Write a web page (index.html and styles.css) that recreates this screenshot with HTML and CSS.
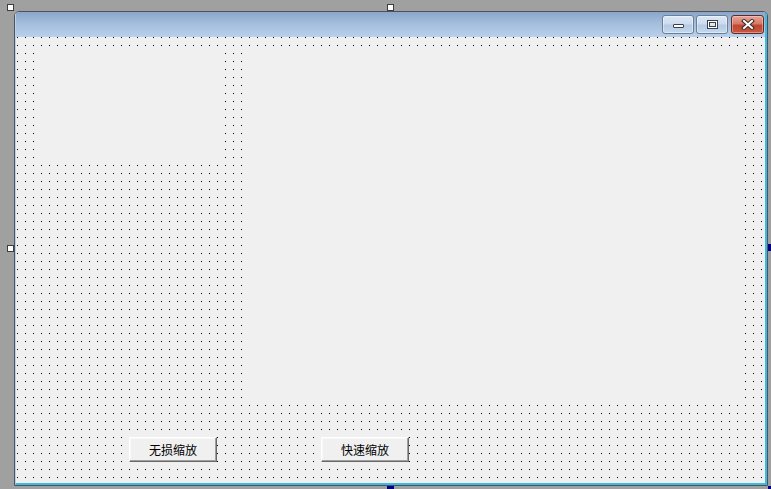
FILE: index.html
```html
<!DOCTYPE html>
<html lang="zh">
<head>
<meta charset="utf-8">
<title>Form1</title>
<link rel="stylesheet" href="styles.css">
</head>
<body>
<div class="canvas">
  <div class="window">
    <div class="frame">
      <div class="titlebar">
        <div class="tb-btn tb-min"><span class="min-glyph"></span></div>
        <div class="tb-btn tb-max"><span class="max-glyph"></span></div>
        <div class="tb-btn tb-close">
          <svg width="14" height="11" viewBox="0 0 14 11">
            <path d="M3 2 L11 9 M11 2 L3 9" stroke="#3a2a2a" stroke-width="4" stroke-linecap="square"/>
            <path d="M3 2 L11 9 M11 2 L3 9" stroke="#ffffff" stroke-width="2" stroke-linecap="square"/>
          </svg>
        </div>
      </div>
      <div class="client">
        <div class="ctl image-box"></div>
        <div class="ctl picture-box"></div>
        <button class="ctl cmd cmd-lossless">无损缩放</button>
        <button class="ctl cmd cmd-fast">快速缩放</button>
      </div>
    </div>
  </div>
  <span class="handle h-tl"></span>
  <span class="handle h-tm"></span>
  <span class="handle h-ml"></span>
  <span class="handle solid h-mr"></span>
  <span class="handle solid h-bm"></span>
  <span class="handle solid h-br"></span>
</div>
</body>
</html>
```
FILE: styles.css
```css
html, body {
  margin: 0;
  padding: 0;
}
body {
  width: 771px;
  height: 489px;
  overflow: hidden;
  background: #a0a0a0;
  font-family: "Noto Sans CJK SC", "Noto Sans", sans-serif;
}
.canvas {
  position: relative;
  width: 771px;
  height: 489px;
  padding: 11px 0 0 14px;
  box-sizing: border-box;
}
.window {
  width: 754px;
  height: 475px;
  box-sizing: border-box;
  border: 1px solid #4e5359;
  border-radius: 5px 5px 0 0;
  background: #f0f0f0;
  overflow: hidden;
}
.frame {
  height: 100%;
  box-sizing: border-box;
  border-left: 1px solid #b9d1ea;
  border-right: 2px solid #39bde6;
  border-bottom: 2px solid #39bde6;
  display: flex;
  flex-direction: column;
}
.titlebar {
  height: 25px;
  flex: none;
  background: linear-gradient(#8aa6c9 0%, #a3bddc 45%, #b8d0ea 100%);
  display: flex;
  justify-content: flex-end;
  align-items: flex-start;
  padding: 3px 1px 0 0;
  box-sizing: border-box;
  gap: 2px;
}
.tb-btn {
  width: 32px;
  height: 19px;
  box-sizing: border-box;
  border: 1px solid #6c7e98;
  border-radius: 3px;
  background: linear-gradient(#dce7f4 0%, #cbdbee 48%, #b4c9e3 52%, #c4d8ee 100%);
  display: flex;
  align-items: center;
  justify-content: center;
  box-shadow: inset 0 0 0 1px rgba(255,255,255,0.45);
}
.tb-max {
  margin-right: 1px;
}
.tb-close {
  width: 33px;
  border-color: #5e2a28;
  background: linear-gradient(#e6a497 0%, #d77a68 45%, #c1452f 55%, #c9583f 100%);
  box-shadow: inset 0 0 0 1px rgba(255,220,210,0.45);
}
.min-glyph {
  width: 11px;
  height: 4px;
  margin-top: 3px;
  box-sizing: border-box;
  background: #ffffff;
  border: 1px solid #3a3f4a;
  border-radius: 1px;
}
.max-glyph {
  width: 11px;
  height: 9px;
  box-sizing: border-box;
  border: 1px solid #3a3f4a;
  box-shadow: inset 0 0 0 1px #ffffff, inset 0 0 0 2px #3a3f4a;
  background: #dfe8f3;
}
.client {
  position: relative;
  flex: 1;
  background-color: #f0f0f0;
  background-image:
    linear-gradient(to right, transparent 1px, #f0f0f0 1px),
    linear-gradient(to bottom, #000000 1px, #f0f0f0 1px);
  background-size: 8px 8px;
  background-position: 1px 0;
}
.ctl {
  position: absolute;
}
.image-box {
  left: 19px;
  top: 12px;
  width: 188px;
  height: 112px;
  background: #f0f0f0;
}
.picture-box {
  left: 228px;
  top: 12px;
  width: 500px;
  height: 355px;
  background: #f0f0f0;
}
.cmd {
  top: 400px;
  width: 88px;
  height: 25px;
  margin: 0;
  padding: 0;
  box-sizing: border-box;
  background: #f0f0f0;
  border: 1px solid;
  border-color: #ffffff #696969 #696969 #ffffff;
  box-shadow: inset -1px -1px 0 #a0a0a0, inset 1px 1px 0 #f8f8f8;
  font-family: "Noto Sans CJK SC", "Noto Sans", sans-serif;
  font-size: 12px;
  line-height: 22px;
  color: #000000;
  text-align: center;
}
.cmd-lossless {
  left: 113px;
}
.cmd-fast {
  left: 305px;
}
.handle {
  position: absolute;
  width: 7px;
  height: 7px;
  box-sizing: border-box;
  background: #ffffff;
  border: 1px solid #3c3c3c;
}
.handle.solid {
  background: #000080;
  border-color: #000080;
}
.h-tl { left: 7px; top: 4px; }
.h-tm { left: 387px; top: 4px; }
.h-ml { left: 7px; top: 245px; }
.h-mr { left: 768px; top: 244px; }
.h-bm { left: 387px; top: 486px; }
.h-br { left: 768px; top: 486px; }
```
